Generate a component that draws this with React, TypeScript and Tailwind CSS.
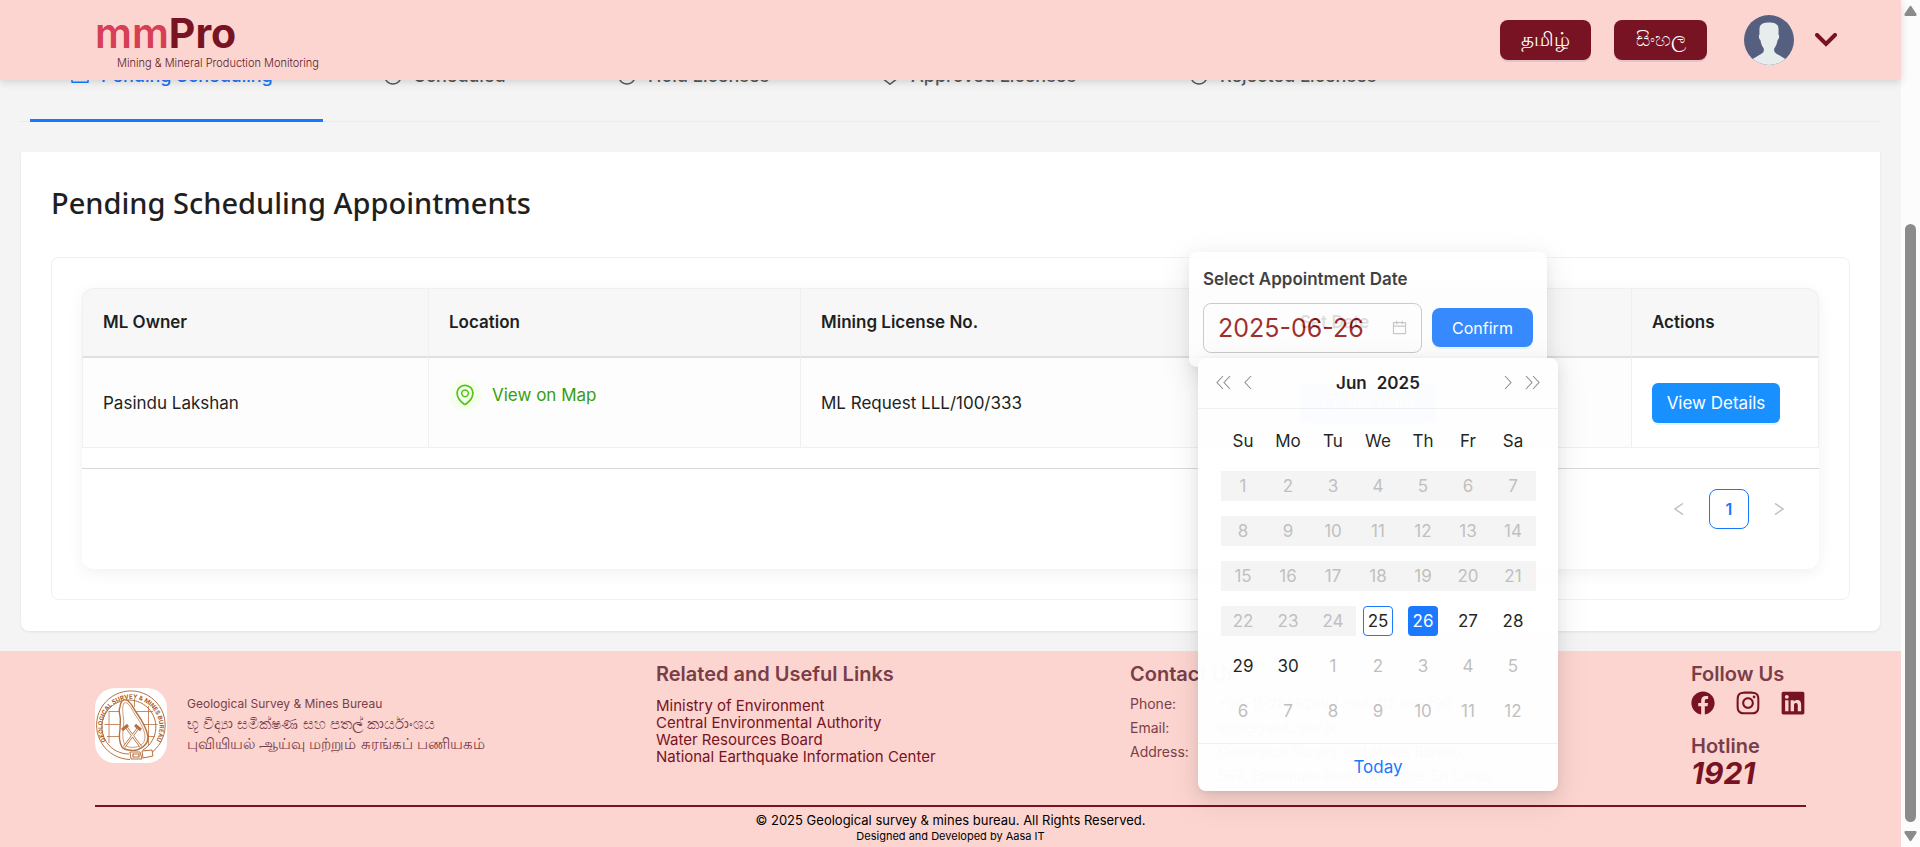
import React from "react";
import {
  AiOutlineCalendar,
  AiOutlineClockCircle,
  AiOutlinePauseCircle,
  AiOutlineSafetyCertificate,
  AiOutlineCloseCircle,
  AiOutlineEnvironment,
  AiOutlineSchedule,
} from "react-icons/ai";
import { FaFacebook, FaInstagram, FaLinkedin } from "react-icons/fa";

type IconType = React.ComponentType<{ className?: string }>;

const tabs: { label: string; icon: IconType; width: string; active?: boolean }[] = [
  { label: "Pending Scheduling", icon: AiOutlineSchedule, width: "w-[293px]", active: true },
  { label: "Scheduled", icon: AiOutlineClockCircle, width: "w-[214px]" },
  { label: "Hold Licenses", icon: AiOutlinePauseCircle, width: "w-[243px]" },
  { label: "Approved Licenses", icon: AiOutlineSafetyCertificate, width: "w-[289px]" },
  { label: "Rejected Licenses", icon: AiOutlineCloseCircle, width: "w-[281px]" },
];

const weekdays = ["Su", "Mo", "Tu", "We", "Th", "Fr", "Sa"];

const weeks: number[][] = [
  [1, 2, 3, 4, 5, 6, 7],
  [8, 9, 10, 11, 12, 13, 14],
  [15, 16, 17, 18, 19, 20, 21],
  [22, 23, 24, 25, 26, 27, 28],
  [29, 30, 1, 2, 3, 4, 5],
  [6, 7, 8, 9, 10, 11, 12],
];

const usefulLinks = [
  "Ministry of Environment",
  "Central Environmental Authority",
  "Water Resources Board",
  "National Earthquake Information Center",
];

const arrowPaths = {
  left: "m11 2-6 6.500 6 6.500",
  right: "m6 2 6 6.500-6 6.500",
  doubleLeft: "M8 2 2 8.500 8 15M15 2 9 8.500l6 6.500",
  doubleRight: "m2 2 6 6.500L2 15M9 2l6 6.500L9 15",
};

function Arrow({ kind }: { kind: keyof typeof arrowPaths }) {
  return (
    <svg viewBox="0 0 17 17" className="size-[17px]" fill="none" stroke="currentColor" strokeWidth="1.100">
      <path d={arrowPaths[kind]} />
    </svg>
  );
}

function Avatar() {
  return (
    <svg viewBox="0 0 50 50" className="size-[50px]" role="img" aria-label="User">
      <defs>
        <clipPath id="avatar-clip">
          <circle cx="25" cy="25" r="25" />
        </clipPath>
      </defs>
      <g clipPath="url(#avatar-clip)">
        <rect width="50" height="50" fill="#556080" />
        <path
          d="M25 7.500c-5 0-8.500 1.200-9.300 4.500-.5 2.600-.2 5.500-.2 7.500-.7.600-.8 1.600-.5 3 .2 1.300.7 2.100 1.400 2.400.5 3.600 1.700 6.300 3.300 8.300.3 1.800.2 3.100-.5 4-1.500 1.800-6.200 3.800-11.200 7.300L8 52h34v-7.500c-5-3.500-9.700-5.500-11.200-7.300-.7-.9-.8-2.200-.5-4 1.600-2 2.800-4.700 3.300-8.300.7-.3 1.200-1.100 1.400-2.400.3-1.400.2-2.400-.5-3 0-2 .3-4.900-.2-7.500C33.500 8.700 30 7.500 25 7.500z"
          fill="#e7eced"
        />
      </g>
    </svg>
  );
}

function Crest() {
  return (
    <svg viewBox="0 0 72 75" className="h-[75px] w-[72px] shrink-0" role="img" aria-label="GSMB crest">
      <defs>
        <path id="crest-arc" d="M11.500 54 A 28.600 28.600 0 1 1 60.500 54" />
      </defs>
      <rect width="72" height="75" rx="20" fill="#ffffff" />
      <g fill="none" stroke="#b9703f" strokeWidth="1">
        <path d="M35 71.500 A 34.300 34.300 0 1 1 51 68" />
        <path d="M34 66 A 27 27 0 1 1 48 62" />
        <path d="M14 23.500h44M9.500 36.500h53M12 48.500h48M14 23v32M39.500 11v8M53.500 18v39" strokeWidth="0.800" />
        <path
          d="M27 13c3-2 6-1 7 1 3 2 4 6 7 10 5 7 11 17 12 25 0 7-5 11-11 13-5 1-13 0-15-3-3-5-3-12-2-18 0-5 1-9 0-13-1-4-1-7 0-9 0-3 1-4 2-6z"
          fill="#ffffff"
          strokeWidth="1.400"
        />
        <path d="M29 15c2-1 4 0 5 2 3 3 4 7 7 11 5 7 9 15 9 21 0 6-4 9-9 10-5 1-9 0-11-2-3-5-2-11-2-16 1-6 1-10 0-14 0-5-1-9 1-12z" strokeWidth="0.700" />
        <path d="M31 39 46 59M44 39 29 59" strokeWidth="2.600" />
        <path d="M31 39 46 59M44 39 29 59" stroke="#ffffff" strokeWidth="1.200" />
        <path d="m27 42 6-5M40 37l6 5" strokeWidth="3" />
        <path d="M35 64h10l2 7H36zM47 63l10-1 1 6-10 2z" fill="#ffffff" />
        <path d="M38 66h6v3h-6z" strokeWidth="1.200" />
      </g>
      <text fill="#a85a28" className="text-[6px] font-bold">
        <textPath href="#crest-arc" startOffset="1">
          GEOLOGICAL SURVEY &amp; MINES BUREAU
        </textPath>
      </text>
    </svg>
  );
}

function Header() {
  return (
    <header className="relative z-10 flex h-20 items-center justify-between bg-[#fcd5d0] pr-16 pl-[95px] shadow-[0_2px_8px_rgba(0,0,0,0.15)]">
      <a href="#home" className="flex flex-col pt-0.5">
        <span className="text-[41px] leading-[44px] font-semibold text-[#d63f56]">
          mm<span className="font-bold text-[#771322]">Pro</span>
        </span>
        <span className="pl-[22px] text-[11px] leading-4 font-light text-[#5a1a28]">Mining &amp; Mineral Production Monitoring</span>
      </a>
      <div className="flex items-center">
        <button type="button" className="h-10 w-[91px] rounded-lg bg-[#771322] pb-0.5 text-xl font-medium text-white shadow-[0_2px_0_rgba(5,60,150,0.1)]">
          தமிழ்
        </button>
        <button type="button" className="ml-[23px] h-10 w-[93px] rounded-lg bg-[#771322] pb-0.5 text-xl font-medium text-white shadow-[0_2px_0_rgba(5,60,150,0.1)]">
          සිංහල
        </button>
        <button type="button" aria-label="Account menu" className="ml-[37px] flex items-center gap-[21px]">
          <Avatar />
          <svg viewBox="0 0 22 14" className="h-[14px] w-[22px]" fill="none" stroke="#771322" strokeWidth="4" strokeLinecap="round">
            <path d="m2 2 9 9 9-9" />
          </svg>
        </button>
      </div>
    </header>
  );
}

function Calendar() {
  return (
    <div className="absolute -top-[25px] -left-[102px] z-30 w-[360px] rounded-lg bg-white text-[#1f1f1f] opacity-98 shadow-[0_6px_16px_rgba(0,0,0,0.08),0_3px_6px_-4px_rgba(0,0,0,0.12),0_9px_28px_8px_rgba(0,0,0,0.05)]">
      <div className="flex h-[51px] items-center justify-between border-b border-[#f0f0f0] px-[17px] text-[#8c8c8c]">
        <div className="flex gap-2">
          <button type="button" aria-label="Previous year"><Arrow kind="doubleLeft" /></button>
          <button type="button" aria-label="Previous month"><Arrow kind="left" /></button>
        </div>
        <div className="flex gap-[10px] text-[17px] font-semibold text-[#1f1f1f]">
          <button type="button">Jun</button>
          <button type="button">2025</button>
        </div>
        <div className="flex gap-2">
          <button type="button" aria-label="Next month"><Arrow kind="right" /></button>
          <button type="button" aria-label="Next year"><Arrow kind="doubleRight" /></button>
        </div>
      </div>
      <div className="flex justify-center pt-[10px] pb-[9px]">
        <table className="table-fixed border-collapse text-center text-[17px]">
          <thead>
            <tr className="h-[45px]">
              {weekdays.map((d) => (
                <th key={d} className="w-[45px] p-0 font-normal">{d}</th>
              ))}
            </tr>
          </thead>
          <tbody>
            {weeks.map((week, w) => (
              <tr key={w} className="h-[45px]">
                {week.map((day, i) => {
                  const index = w * 7 + i;
                  const disabled = index < 24;
                  const muted = disabled || index > 29;
                  const face =
                    index === 24
                      ? "mx-auto w-[30px] rounded border border-[#1677ff]"
                      : index === 25
                        ? "mx-auto w-[30px] rounded bg-[#1677ff] text-white"
                        : disabled
                          ? "w-full bg-[#f4f4f4]"
                          : "w-full";
                  return (
                    <td key={i} className="p-0">
                      <button
                        type="button"
                        disabled={disabled}
                        className={`flex h-[30px] items-center justify-center ${face} ${muted ? "text-[#bfbfbf]" : ""}`}
                      >
                        {day}
                      </button>
                    </td>
                  );
                })}
              </tr>
            ))}
          </tbody>
        </table>
      </div>
      <div className="flex h-12 items-center justify-center border-t border-[#f0f0f0]">
        <button type="button" className="text-[17px] text-[#1677ff]">Today</button>
      </div>
    </div>
  );
}

function DatePopover() {
  return (
    <div className="absolute bottom-full left-1/2 z-20 mb-4 w-[358px] -translate-x-1/2 rounded-lg bg-white px-[14px] pt-[15px] pb-[14px] opacity-85 shadow-[0_6px_16px_rgba(0,0,0,0.08),0_3px_6px_-4px_rgba(0,0,0,0.12),0_9px_28px_8px_rgba(0,0,0,0.05)]">
      <label htmlFor="appointment-date" className="block text-[17px] leading-6 font-semibold text-[#1f1f1f]">
        Select Appointment Date
      </label>
      <div className="mt-3 flex items-center gap-[10px]">
        <div className="flex h-[50px] w-[219px] items-center rounded-lg border border-[#c4c4c4] bg-white/10 pr-[13px] pl-[14px]">
          <input
            id="appointment-date"
            type="text"
            defaultValue="2025-06-26"
            className="w-full min-w-0 bg-transparent text-[25px] text-[#8f0d0d] outline-none"
          />
          <AiOutlineCalendar className="size-[17px] shrink-0 text-[#bfbfbf]" />
        </div>
        <button type="button" className="h-[39px] flex-1 rounded-lg bg-[#1677ff] text-base text-white shadow-[0_2px_0_rgba(5,145,255,0.1)]">
          Confirm
        </button>
      </div>
    </div>
  );
}

function AppointmentsTable() {
  return (
    <div className="rounded-xl bg-white pb-10 shadow-[0_4px_16px_rgba(0,0,0,0.06)]">
      <table className="w-full table-fixed border-separate border-spacing-0 text-left text-[17px] leading-6 text-[#1f1f1f]">
        <colgroup>
          <col className="w-[347px]" />
          <col className="w-[372px]" />
          <col className="w-[479px]" />
          <col />
          <col className="w-[187px]" />
        </colgroup>
        <thead>
          <tr className="h-[70px] bg-[#f7f7f7] [&>th]:border-t [&>th]:border-r [&>th]:border-b-2 [&>th]:border-[#f0f0f0] [&>th]:border-b-[#e0e0e0] [&>th]:px-5 [&>th]:pb-0.5 [&>th]:font-semibold">
            <th className="rounded-tl-xl border-l">ML Owner</th>
            <th>Location</th>
            <th>Mining License No.</th>
            <th>Set Date</th>
            <th className="rounded-tr-xl">Actions</th>
          </tr>
        </thead>
        <tbody>
          <tr className="h-[90px] bg-[#fdfdfd] [&>td]:border-r [&>td]:border-b [&>td]:border-[#f0f0f0] [&>td]:px-5">
            <td className="border-l">Pasindu Lakshan</td>
            <td>
              <a href="#map" className="mb-4 flex items-center gap-[11px] text-[#389e0d]">
                <span className="flex size-8 items-center justify-center rounded-full bg-[#f6ffed]">
                  <AiOutlineEnvironment className="size-6 text-[#52c41a]" />
                </span>
                View on Map
              </a>
            </td>
            <td>ML Request LLL/100/333</td>
            <td>
              <div className="relative w-[136px]">
                <button type="button" className="flex h-10 w-full items-center justify-center gap-2 rounded-lg bg-[#1677ff] text-white">
                  <AiOutlineCalendar className="size-[17px]" />
                  Set Date
                </button>
                <DatePopover />
                <Calendar />
              </div>
            </td>
            <td className="bg-white">
              <button type="button" className="h-10 w-32 rounded-md bg-[#1890ff] text-white shadow-[0_2px_0_rgba(5,145,255,0.1)]">
                View Details
              </button>
            </td>
          </tr>
        </tbody>
      </table>
      <nav aria-label="Pagination" className="mt-5 flex items-center justify-end gap-[10px] border-t border-[#d9d9d9] pt-5 pr-5 text-[#bfbfbf]">
        <button type="button" aria-label="Previous page" className="flex size-10 items-center justify-center">
          <svg viewBox="0 0 10 12" className="h-3 w-[10px]" fill="none" stroke="currentColor" strokeWidth="1.500"><path d="M9 0.500 1 6l8 5.500" /></svg>
        </button>
        <button type="button" aria-current="page" className="size-10 rounded-lg border border-[#1677ff] bg-white text-base font-semibold text-[#1677ff]">
          1
        </button>
        <button type="button" aria-label="Next page" className="flex size-10 items-center justify-center">
          <svg viewBox="0 0 10 12" className="h-3 w-[10px]" fill="none" stroke="currentColor" strokeWidth="1.500"><path d="m1 0.500 8 5.500-8 5.500" /></svg>
        </button>
      </nav>
    </div>
  );
}

function Footer() {
  return (
    <footer className="flex flex-1 flex-col bg-[#fcd5d0] px-[95px]">
      <div className="flex h-[154px] text-[#7a3e48]">
        <div className="flex w-[561px] gap-5 pt-[37px]">
          <Crest />
          <div className="pt-1 text-[12px]">
            <p className="leading-6">Geological Survey &amp; Mines Bureau</p>
            <p className="text-[15px] leading-4">භූ විද්‍යා සමීක්ෂණ සහ පතල් කාර්යාංශය</p>
            <p className="text-[15px] leading-6">புவியியல் ஆய்வு மற்றும் சுரங்கப் பணியகம்</p>
          </div>
        </div>
        <div className="w-[474px] pt-2">
          <h3 className="text-xl leading-[30px] font-semibold">Related and Useful Links</h3>
          <ul className="pt-2 text-[15px] leading-[17px] text-[#771322]">
            {usefulLinks.map((l) => (
              <li key={l}><a href="#link">{l}</a></li>
            ))}
          </ul>
        </div>
        <div className="flex-1 pt-2">
          <h3 className="text-xl leading-[30px] font-semibold">Contact Us</h3>
          <dl className="grid grid-cols-[88px_1fr] pt-[3px] text-sm leading-6">
            <dt>Phone:</dt>
            <dd>+94-11-2886289 / +94-112 886290</dd>
            <dt>Email:</dt>
            <dd>info@gsmb.gov.lk</dd>
            <dt>Address:</dt>
            <dd>
              Geological Survey and Mines Bureau,
              <br />
              569, Epitamulla Road, Pitakotte, Sri Lanka.
            </dd>
          </dl>
        </div>
        <div className="w-[115px] pt-2">
          <h3 className="text-xl leading-[30px] font-semibold">Follow Us</h3>
          <div className="flex items-center justify-between pt-px text-[#771322]">
            <a href="#facebook" aria-label="Facebook"><FaFacebook className="size-6" /></a>
            <a href="#instagram" aria-label="Instagram"><FaInstagram className="size-[26px]" /></a>
            <a href="#linkedin" aria-label="LinkedIn"><FaLinkedin className="size-[26px]" /></a>
          </div>
          <h3 className="pt-[15px] text-xl leading-[30px] font-semibold">Hotline</h3>
          <p className="text-[30px] leading-6 font-bold text-[#771322] italic">1921</p>
        </div>
      </div>
      <div className="border-t-2 border-[#771322] pt-[3px] text-center text-black">
        <p className="text-[13px] leading-5">© 2025 Geological survey &amp; mines bureau. All Rights Reserved.</p>
        <p className="text-[11px] leading-3">Designed and Developed by Aasa IT</p>
      </div>
    </footer>
  );
}

function ScrollTrack() {
  return (
    <div aria-hidden="true" className="flex h-screen w-[19px] shrink-0 flex-col items-center bg-[#fcfcfc] py-[5px]">
      <svg viewBox="0 0 13 11" className="h-[11px] w-[13px] shrink-0" fill="#8b8b8b"><path d="M5.500 1.500q1-1.500 2 0l5 7.500q.5 2-1 2h-10q-1.500 0-1-2z" /></svg>
      <div className="grow-[208]" />
      <div className="w-[11px] grow-[598] rounded-full bg-[#8b8b8b]" />
      <svg viewBox="0 0 13 11" className="mt-[9px] h-[11px] w-[13px] shrink-0" fill="#8b8b8b"><path d="M5.500 9.500q1 1.500 2 0l5-7.500q.5-2-1-2h-10q-1.500 0-1 2z" /></svg>
    </div>
  );
}

export default function App() {
  return (
    <div className="flex min-h-screen bg-[#f4f4f4] font-['Inter','Noto_Sans',sans-serif]">
      <div className="flex min-w-0 flex-1 flex-col">
        <Header />
        <main className="px-5">
          <div role="tablist" className="-mt-12 flex gap-5 border-b border-[#ececec] px-[10px]">
            {tabs.map(({ label, icon: Icon, width, active }) => (
              <button
                key={label}
                type="button"
                role="tab"
                aria-selected={!!active}
                className={`-mb-px flex h-[90px] items-center gap-[11px] border-b-3 pl-10 text-lg font-medium ${width} ${
                  active ? "border-[#1677ff] text-[#1677ff]" : "border-transparent text-[#595959]"
                }`}
              >
                <Icon className="size-5" />
                {label}
              </button>
            ))}
          </div>
          <section className="mx-px mt-[30px] mb-5 rounded-b-lg bg-white px-[30px] pt-[29px] pb-[31px] shadow-[0_1px_3px_rgba(0,0,0,0.08)]">
            <h2 className="font-['Noto_Sans',sans-serif] text-[29px] leading-[44px] font-medium text-[#1f1f1f]">
              Pending Scheduling Appointments
            </h2>
            <div className="mt-8 rounded-lg border border-[#f0f0f0] p-[30px]">
              <AppointmentsTable />
            </div>
          </section>
        </main>
        <Footer />
      </div>
      <ScrollTrack />
    </div>
  );
}
